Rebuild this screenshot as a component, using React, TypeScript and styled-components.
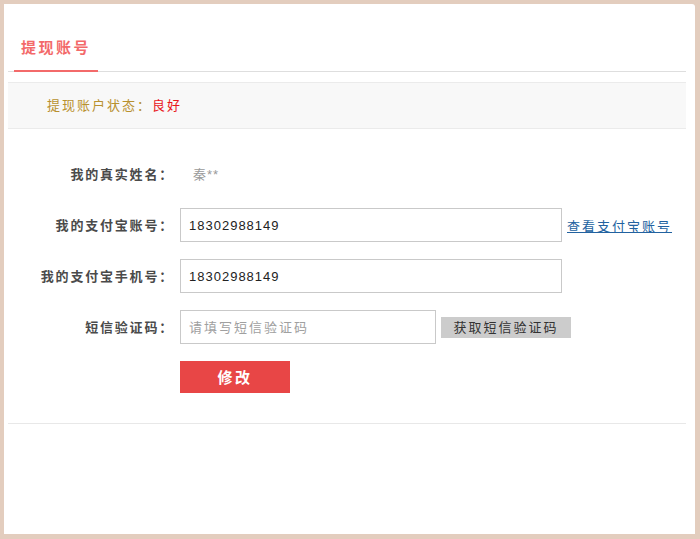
import React from 'react';
import styled, { createGlobalStyle } from 'styled-components';

const GlobalStyle = createGlobalStyle`
  * {
    box-sizing: border-box;
  }
  html, body {
    margin: 0;
    padding: 0;
    background: #e3cdbe;
  }
  body {
    padding: 4px 5px 5px 4px;
    font-family: "Liberation Sans", "Noto Sans CJK SC", sans-serif;
  }
`;

const Card = styled.div`
  height: 530px;
  background: #fff;
  border-radius: 0 3px 0 0;
  padding: 0 9px 0 4px;
`;

const TabBar = styled.div`
  display: flex;
  padding: 24px 0 0 6px;
  border-bottom: 1px solid #dedede;
`;

const Tab = styled.div`
  width: 84px;
  height: 44px;
  margin-bottom: -1px;
  line-height: 40px;
  text-align: center;
  font-size: 15px;
  font-weight: bold;
  letter-spacing: 2.5px;
  color: #f36a6a;
  border-bottom: 2px solid #f36a6a;
`;

const StatusBar = styled.div`
  margin-top: 10px;
  height: 47px;
  display: flex;
  align-items: center;
  padding: 0 0 3px 39px;
  background: #f8f8f8;
  border-top: 1px solid #ebebeb;
  border-bottom: 1px solid #ebebeb;
  font-size: 13px;
  letter-spacing: 2px;
  color: #b8912f;
`;

const Good = styled.span`
  color: #e8161c;
`;

const Form = styled.div`
  display: flex;
  flex-direction: column;
  gap: 17px;
  padding-top: 28px;
  padding-bottom: 30px;
  border-bottom: 1px solid #e8e8e8;
`;

const Row = styled.div`
  display: flex;
  align-items: center;
  height: 34px;
`;

const Label = styled.div`
  width: 172px;
  padding: 0 6px 2px 0;
  text-align: right;
  font-size: 13px;
  font-weight: bold;
  letter-spacing: 1.8px;
  color: #4a4a4a;
`;

const Value = styled.div`
  padding: 0 0 2px 13px;
  font-size: 13px;
  letter-spacing: 1px;
  color: #9a9a9a;
`;

const Input = styled.input<{ $width: number }>`
  width: ${(p) => p.$width}px;
  height: 34px;
  padding: 0 8px;
  border: 1px solid #c9c9c9;
  outline: none;
  font-family: inherit;
  font-size: 13px;
  letter-spacing: 1px;
  color: #222;
  &::placeholder {
    color: #a0a0a0;
    letter-spacing: 2px;
  }
`;

const Link = styled.a`
  margin-left: 5px;
  font-size: 13px;
  letter-spacing: 2px;
  color: #2262a0;
  text-decoration: underline;
  cursor: pointer;
`;

const CodeButton = styled.button`
  margin-left: 5px;
  width: 130px;
  height: 21px;
  padding: 0 0 1px;
  border: none;
  background: #cccccc;
  font-family: inherit;
  font-size: 13px;
  letter-spacing: 2px;
  color: #333;
  cursor: pointer;
`;

const SubmitRow = styled.div`
  padding-left: 172px;
`;

const SubmitButton = styled.button`
  width: 110px;
  height: 32px;
  padding: 0 0 2px;
  border: none;
  background: #e84646;
  font-family: inherit;
  font-size: 15px;
  font-weight: bold;
  letter-spacing: 2.5px;
  color: #fff;
  cursor: pointer;
`;

export default function App() {
  return (
    <>
      <GlobalStyle />
      <Card>
        <TabBar>
          <Tab>提现账号</Tab>
        </TabBar>
        <StatusBar>
          提现账户状态：<Good>良好</Good>
        </StatusBar>
        <Form>
          <Row>
            <Label>我的真实姓名：</Label>
            <Value>秦**</Value>
          </Row>
          <Row>
            <Label>我的支付宝账号：</Label>
            <Input $width={382} defaultValue="18302988149" />
            <Link>查看支付宝账号</Link>
          </Row>
          <Row>
            <Label>我的支付宝手机号：</Label>
            <Input $width={382} defaultValue="18302988149" />
          </Row>
          <Row>
            <Label>短信验证码：</Label>
            <Input $width={256} placeholder="请填写短信验证码" />
            <CodeButton>获取短信验证码</CodeButton>
          </Row>
          <SubmitRow>
            <SubmitButton>修改</SubmitButton>
          </SubmitRow>
        </Form>
      </Card>
    </>
  );
}
